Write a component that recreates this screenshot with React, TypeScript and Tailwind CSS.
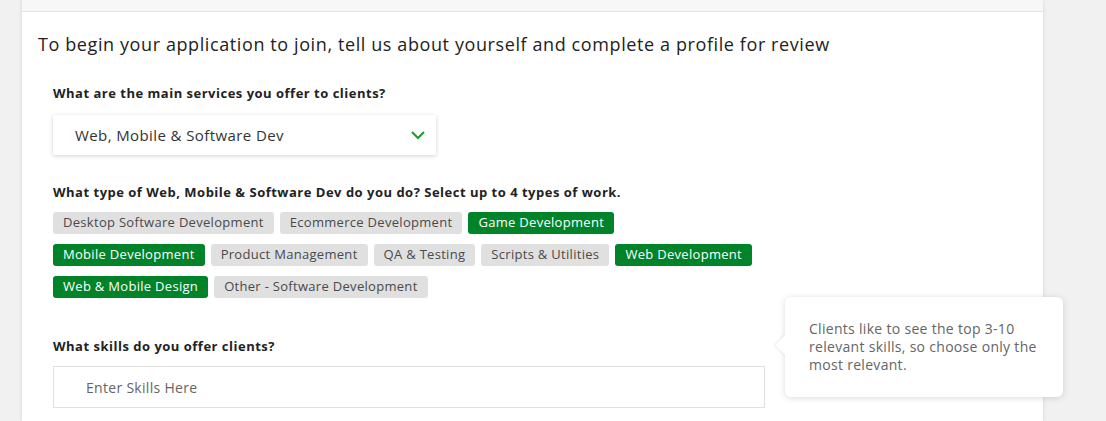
import React from "react";

const chips: { label: string; on?: boolean }[][] = [
  [
    { label: "Desktop Software Development" },
    { label: "Ecommerce Development" },
    { label: "Game Development", on: true },
  ],
  [
    { label: "Mobile Development", on: true },
    { label: "Product Management" },
    { label: "QA & Testing" },
    { label: "Scripts & Utilities" },
    { label: "Web Development", on: true },
  ],
  [
    { label: "Web & Mobile Design", on: true },
    { label: "Other - Software Development" },
  ],
];

export default function App() {
  return (
    <div className="h-[421px] w-[1106px] overflow-hidden bg-[#f1f1f1] font-['Open_Sans',sans-serif]">
      <div className="relative ml-[22px] h-full w-[1021px] bg-white shadow-[0_0_4px_rgba(0,0,0,0.12)]">
        {/* top strip */}
        <div className="h-[12px] border-b border-[#e4e4e4] bg-[#f7f7f7]" />

        <div className="pl-[16px] pt-[20px]">
          <h1 className="text-[18px] leading-[24px] tracking-[0.6px] text-[#222]">
            To begin your application to join, tell us about yourself and complete a profile for review
          </h1>

          <div className="pl-[15px]">
            <p className="mt-[28px] text-[13px] font-bold leading-[18px] tracking-[0.5px] text-[#222]">
              What are the main services you offer to clients?
            </p>
            <div className="mt-[13px] flex h-[40px] w-[383px] items-center justify-between rounded-[2px] bg-white pl-[22px] pr-[10px] shadow-[0_1px_4px_rgba(0,0,0,0.18)]">
              <span className="text-[15px] tracking-[0.4px] text-[#333]">Web, Mobile &amp; Software Dev</span>
              <svg width="16" height="16" viewBox="0 0 16 16" fill="none">
                <path d="M2 5l6 6 6-6" stroke="#1d9a2c" strokeWidth="2" />
              </svg>
            </div>

            <p className="mt-[28px] text-[13px] font-bold leading-[18px] tracking-[0.5px] text-[#222]">
              What type of Web, Mobile &amp; Software Dev do you do? Select up to 4 types of work.
            </p>
            <div className="mt-[11px] flex flex-col gap-[10px]">
              {chips.map((row, i) => (
                <div key={i} className="flex gap-[6px]">
                  {row.map((c) => (
                    <span
                      key={c.label}
                      className={
                        c.on
                          ? "flex h-[22px] items-center rounded-[3px] bg-[#008329] px-[10px] text-[13px] tracking-[0.3px] text-white"
                          : "flex h-[22px] items-center rounded-[3px] bg-[#e0e0e0] px-[10px] text-[13px] tracking-[0.3px] text-[#4a4a4a]"
                      }
                    >
                      {c.label}
                    </span>
                  ))}
                </div>
              ))}
            </div>

            <p className="mt-[39px] text-[13px] font-bold leading-[18px] tracking-[0.5px] text-[#222]">
              What skills do you offer clients?
            </p>
            <div className="mt-[11px] flex h-[42px] w-[712px] items-center border border-[#e0e0e0] pl-[32px]">
              <span className="text-[14px] tracking-[0.3px] text-[#656565]">Enter Skills Here</span>
            </div>
          </div>
        </div>

        {/* tooltip */}
        <div className="absolute left-[763px] top-[297px] w-[278px] rounded-[6px] bg-white px-[24px] py-[23px] shadow-[0_1px_6px_rgba(0,0,0,0.15)]">
          <span className="absolute left-[-7px] top-[41px] h-[14px] w-[14px] rotate-45 bg-white shadow-[-1px_1px_2px_rgba(0,0,0,0.08)]" />
          <p className="relative text-[14px] leading-[18px] tracking-[0.3px] text-[#656565]">
            Clients like to see the top 3-10 relevant skills, so choose only the most relevant.
          </p>
        </div>
      </div>
    </div>
  );
}
